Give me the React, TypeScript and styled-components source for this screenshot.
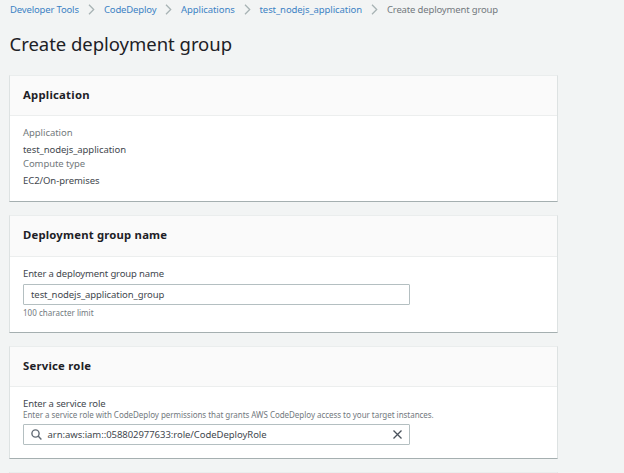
import React from 'react';
import styled, { createGlobalStyle } from 'styled-components';

const GlobalStyle = createGlobalStyle`
  * { box-sizing: border-box; }
  html, body { margin: 0; background: #f2f4f4; overflow: hidden; }
  body { font-family: 'Noto Sans', 'Open Sans', sans-serif; color: #42474e; }
`;

const Page = styled.main`
  width: 624px;
  height: 473px;
  padding: 0 0 0 9px;
  overflow: hidden;
  background: #f2f4f4;
`;

const Breadcrumbs = styled.nav`
  display: flex;
  align-items: center;
  height: 19px;
  padding-left: 1px;
  font-size: 9.5px;
  line-height: 19px;
  white-space: nowrap;
`;

const Crumb = styled.a<{ $spacing: number; $width: number }>`
  width: ${p => p.$width}px;
  letter-spacing: ${p => p.$spacing}px;
  color: #3c82c4;
  text-decoration: none;
`;

const CurrentCrumb = styled(Crumb).attrs({ as: 'span' })`
  color: #72797e;
`;

const Separator = styled.svg`
  flex: none;
  width: 7px;
  height: 11px;
  margin: 0 9px;
  fill: none;
  stroke: #a8b3b4;
  stroke-width: 1.3;
`;

const Title = styled.h1`
  height: 26px;
  margin: 12px 0 18px 0.5px;
  font-size: 18.5px;
  line-height: 26px;
  font-weight: 400;
  letter-spacing: -0.03px;
  color: #1d2126;
  white-space: nowrap;
`;

const Card = styled.section<{ $height: number }>`
  width: 549px;
  height: ${p => p.$height}px;
  margin-bottom: 13px;
  background: #fff;
  border: 1px solid #dde2e2;
  border-top-color: #eaeded;
  border-bottom-color: #a5afb0;
`;

const CardHeader = styled.header<{ $height: number }>`
  height: ${p => p.$height}px;
  padding-left: 13px;
  background: #fafafa;
  border-bottom: 1px solid #eceeee;
`;

const CardTitle = styled.h2<{ $spacing: number }>`
  margin: 0;
  font-size: 11.3px;
  line-height: 38px;
  font-weight: 700;
  letter-spacing: ${p => p.$spacing}px;
  color: #1d2126;
`;

const CardBody = styled.div<{ $top: number }>`
  padding: ${p => p.$top}px 0 0 13px;
  white-space: nowrap;
`;

const Details = styled.dl`
  margin: 0;
  font-size: 9.5px;
`;

const Term = styled.dt<{ $spacing: number }>`
  height: 15px;
  line-height: 15px;
  letter-spacing: ${p => p.$spacing}px;
  color: #72797c;
`;

const Value = styled.dd<{ $spacing: number }>`
  height: 16px;
  margin: 0;
  line-height: 19px;
  letter-spacing: ${p => p.$spacing}px;
`;

const Label = styled.label<{ $height: number; $spacing: number }>`
  display: block;
  height: ${p => p.$height}px;
  font-size: 9.5px;
  line-height: 14px;
  letter-spacing: ${p => p.$spacing}px;
`;

const Hint = styled.p<{ $height: number; $spacing: number; $top?: number }>`
  height: ${p => p.$height}px;
  margin: ${p => p.$top ?? 0}px 0 0;
  font-size: 8px;
  line-height: 12px;
  letter-spacing: ${p => p.$spacing}px;
  color: #72797e;
`;

const Field = styled.div`
  display: flex;
  align-items: center;
  width: 387px;
  height: 21px;
  padding: 0 7px;
  background: #fff;
  border: 1px solid #b4bfc1;
  border-radius: 1px;
`;

const FieldText = styled.span<{ $spacing: number }>`
  flex: 1;
  font-size: 9.5px;
  line-height: 19px;
  letter-spacing: ${p => p.$spacing}px;
`;

const SearchIcon = styled.svg`
  width: 11px;
  height: 11px;
  margin-right: 5.5px;
  fill: none;
  stroke: #626b75;
  stroke-width: 1.4;
`;

const ClearIcon = styled.svg`
  width: 9px;
  height: 9px;
  fill: none;
  stroke: #4a525c;
  stroke-width: 1.3;
`;

const Chevron = () => (
  <Separator viewBox="0 0 7 11"><path d="M1 .8 5.7 5.5 1 10.2" /></Separator>
);

export default function App() {
  return (
    <>
      <GlobalStyle />
      <Page>
        <Breadcrumbs>
          <Crumb href="#" $width={69} $spacing={-0.16}>Developer Tools</Crumb>
          <Chevron />
          <Crumb href="#" $width={52} $spacing={-0.16}>CodeDeploy</Crumb>
          <Chevron />
          <Crumb href="#" $width={53.5} $spacing={-0.08}>Applications</Crumb>
          <Chevron />
          <Crumb href="#" $width={102.5} $spacing={-0.08}>test_nodejs_application</Crumb>
          <Chevron />
          <CurrentCrumb $width={112} $spacing={-0.16}>Create deployment group</CurrentCrumb>
        </Breadcrumbs>
        <Title>Create deployment group</Title>
        <Card $height={127}>
          <CardHeader $height={40}><CardTitle $spacing={0.24}>Application</CardTitle></CardHeader>
          <CardBody $top={9}>
            <Details>
              <Term $spacing={-0.05}>Application</Term>
              <Value $spacing={-0.06}>test_nodejs_application</Value>
              <Term $spacing={-0.08}>Compute type</Term>
              <Value $spacing={-0.06}>EC2/On-premises</Value>
            </Details>
          </CardBody>
        </Card>
        <Card $height={118}>
          <CardHeader $height={41}><CardTitle $spacing={0.2}>Deployment group name</CardTitle></CardHeader>
          <CardBody $top={10}>
            <Label $height={17} $spacing={-0.14}>Enter a deployment group name</Label>
            <Field><FieldText $spacing={-0.08}>test_nodejs_application_group</FieldText></Field>
            <Hint $height={16} $top={2} $spacing={0.04}>100 character limit</Hint>
          </CardBody>
        </Card>
        <Card $height={113}>
          <CardHeader $height={40}><CardTitle $spacing={0.24}>Service role</CardTitle></CardHeader>
          <CardBody $top={10}>
            <Label $height={12} $spacing={-0.12}>Enter a service role</Label>
            <Hint $height={15} $spacing={-0.038}>Enter a service role with CodeDeploy permissions that grants AWS CodeDeploy access to your target instances.</Hint>
            <Field>
              <SearchIcon viewBox="0 0 11 11"><circle cx="4.5" cy="4.5" r="3.6" /><path d="m7.1 7.1 3.3 3.3" /></SearchIcon>
              <FieldText $spacing={-0.05}>arn:aws:iam::058802977633:role/CodeDeployRole</FieldText>
              <ClearIcon viewBox="0 0 9 9"><path d="m.5.5 8 8m0-8-8 8" /></ClearIcon>
            </Field>
          </CardBody>
        </Card>
        <Card $height={113} />
      </Page>
    </>
  );
}
